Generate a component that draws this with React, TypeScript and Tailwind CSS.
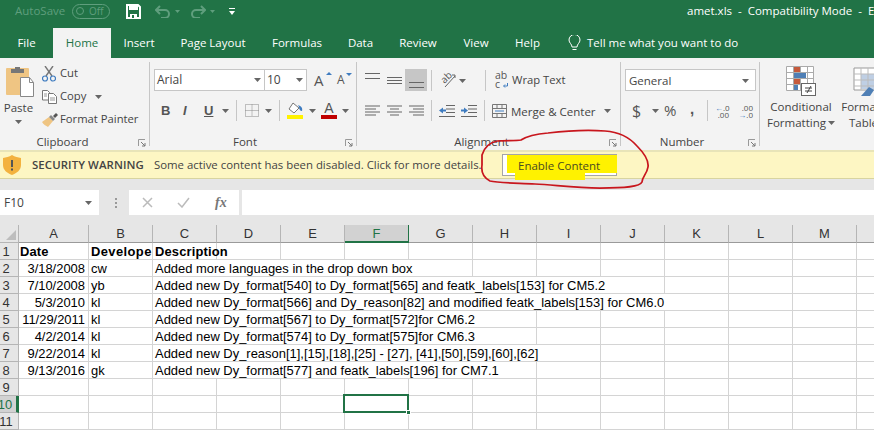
import type { ReactNode } from "react";

const ui = "font-['Open_Sans',sans-serif]";

const tabs = [
  { name: "File", w: "w-[53px]" },
  { name: "Home", w: "w-[58px]" },
  { name: "Insert", w: "w-[56px]" },
  { name: "Page Layout", w: "w-[92px]" },
  { name: "Formulas", w: "w-[76px]" },
  { name: "Data", w: "w-[51px]" },
  { name: "Review", w: "w-[64px]" },
  { name: "View", w: "w-[52px]" },
  { name: "Help", w: "w-[51px]" },
];

const columns = ["A", "B", "C", "D", "E", "F", "G", "H", "I", "J", "K", "L", "M", "N"];

const rows = [
  { date: "3/18/2008", dev: "cw", text: "Added more languages in the drop down box" },
  { date: "7/10/2008", dev: "yb", text: "Added new Dy_format[540] to Dy_format[565] and featk_labels[153] for CM5.2" },
  { date: "5/3/2010", dev: "kl", text: "Added new Dy_format[566] and Dy_reason[82] and modified featk_labels[153] for CM6.0" },
  { date: "11/29/2011", dev: "kl", text: "Added new Dy_format[567] to Dy_format[572]for CM6.2" },
  { date: "4/2/2014", dev: "kl", text: "Added new Dy_format[574] to Dy_format[575]for CM6.3" },
  { date: "9/22/2014", dev: "kl", text: "Added new Dy_reason[1],[15],[18],[25] - [27], [41],[50],[59],[60],[62]" },
  { date: "9/13/2016", dev: "gk", text: "Added new Dy_format[577] and featk_labels[196] for CM7.1" },
];

function Caret({ className = "" }: { className?: string }) {
  return (
    <svg width="7" height="4" viewBox="0 0 7 4" className={`shrink-0 ${className}`}>
      <path d="M0 0h7L3.500 4z" fill="#666" />
    </svg>
  );
}

function Launcher({ className = "" }: { className?: string }) {
  return (
    <svg width="8" height="8" viewBox="0 0 8 8" className={className}>
      <path d="M.5 7V.5H7" fill="none" stroke="#999" />
      <path d="M3 3l4 4M7 4v3H4" fill="none" stroke="#777" />
    </svg>
  );
}

function Sep({ className = "" }: { className?: string }) {
  return <div className={`h-[21px] w-px shrink-0 bg-[#c6c6c6] ${className}`} />;
}

function Group({ label, w, pad, children }: { label: string; w: string; pad: string; children: ReactNode }) {
  return (
    <div className={`relative flex h-[84px] shrink-0 flex-col border-r border-[#c6c6c6] ${w}`}>
      <div className="h-[73px] shrink-0">{children}</div>
      <div className={`flex h-[14px] shrink-0 items-center justify-center text-[11.500px] text-[#444] ${pad}`}>{label}</div>
      <Launcher className="absolute right-[3px] bottom-[-1px]" />
    </div>
  );
}

function Lines({ widths, align = "center" }: { widths: number[]; align?: string }) {
  return (
    <svg width="15" height="11" viewBox="0 0 15 11" className="shrink-0">
      {widths.map((w, i) => (
        <rect
          key={i}
          x={align === "left" ? 0 : align === "right" ? 15 - w : (15 - w) / 2}
          y={i * 3 + 0.5}
          width={w}
          height="1"
          fill="#666"
        />
      ))}
    </svg>
  );
}

function VLines({ ys }: { ys: number[] }) {
  return (
    <svg width="15" height="22" viewBox="0 0 15 22" className="shrink-0">
      {ys.map((y) => (
        <rect key={y} x="0" y={y} width="15" height="1" fill="#666" />
      ))}
    </svg>
  );
}

function Clipboard() {
  return (
    <Group label="Clipboard" w="w-[150px]" pad="pr-[24px]">
      <div className="flex">
        <div className="ml-[4px] flex w-[31px] shrink-0 flex-col items-center pt-[4px]">
          <svg width="30" height="31" viewBox="0 0 30 31">
            <rect x="1" y="2" width="23" height="27" rx="1" fill="#efc583" />
            <path d="M6 3h13v4H6zM10 1h5v3h-5z" fill="#777" />
            <path d="M15.500 11.500h9l4 5v14h-13z" fill="#fff" stroke="#888" />
            <path d="M24.500 11.500v5h4" fill="none" stroke="#888" />
          </svg>
          <div className="mt-[2px] ml-[-2px] text-[11.500px] leading-[18px] text-[#444]">Paste</div>
          <Caret className="mt-[3px] ml-[-2px]" />
        </div>
        <div className="ml-[7px] flex flex-col text-[11.250px] text-[#444]">
          <div className="flex h-[23px] items-center">
            <svg width="14" height="16" viewBox="0 0 14 16" className="shrink-0">
              <path d="M3 0l7 10M11 0L4 10" stroke="#777" strokeWidth="1.400" />
              <circle cx="3" cy="12.500" r="2.500" fill="none" stroke="#3f7cc0" strokeWidth="1.200" />
              <circle cx="11" cy="12.500" r="2.500" fill="none" stroke="#3f7cc0" strokeWidth="1.200" />
            </svg>
            <span className="ml-[4px]">Cut</span>
          </div>
          <div className="flex h-[23px] items-center">
            <svg width="15" height="14" viewBox="0 0 15 14" className="shrink-0">
              <path d="M.5.500h5l2 2V10H.5z" fill="#fff" stroke="#777" />
              <path d="M6.500 3.500h5l3 3v7h-8z" fill="#fff" stroke="#777" />
              <path d="M8 8h5M8 10h5M2 4h3M2 6h3" stroke="#999" />
            </svg>
            <span className="ml-[3px]">Copy</span>
            <Caret className="ml-[9px]" />
          </div>
          <div className="flex h-[23px] items-center">
            <svg width="16" height="14" viewBox="0 0 16 14" className="shrink-0">
              <path d="M0 9l7-5 4 4-5 6C4 13 1 11 0 9z" fill="#efc583" />
              <path d="M7 4l2-2 4 4-2 2z" fill="#888" />
              <path d="M11 3l3-3 2 2-3 3z" fill="#555" />
            </svg>
            <span className="ml-[2px] whitespace-nowrap">Format Painter</span>
          </div>
        </div>
      </div>
    </Group>
  );
}

function FontGroup() {
  return (
    <Group label="Font" w="w-[207px]" pad="pr-[16px]">
      <div className="flex items-center pt-[7px] pl-[4px]">
        <div className="flex h-[22px] w-[111px] items-center justify-between border border-[#c6c6c6] bg-white pr-[3px] pl-[2px] text-[12px] text-[#444]">
          Arial
          <Caret />
        </div>
        <div className="ml-[-1px] flex h-[22px] w-[43px] items-center justify-between border border-[#c6c6c6] bg-white pr-[3px] pl-[2px] text-[12px] text-[#444]">
          10
          <Caret />
        </div>
        <div className="relative ml-[7px] w-[14px] text-[15px] leading-none text-[#555]">
          A
          <svg width="6" height="3" viewBox="0 0 6 3" className="absolute top-[-1px] right-[-4px]"><path d="M0 3h6L3 0z" fill="#3f7cc0" /></svg>
        </div>
        <div className="relative ml-[9px] w-[12px] text-[12px] leading-none text-[#555]">
          A
          <svg width="6" height="3" viewBox="0 0 6 3" className="absolute top-[-1px] right-[-3px]"><path d="M0 0h6L3 3z" fill="#3f7cc0" /></svg>
        </div>
      </div>
      <div className="mt-[9px] flex h-[21px] items-center pl-[11px] text-[#555]">
        <span className="w-[22px] shrink-0 font-['Liberation_Sans',sans-serif] text-[13px] font-bold">B</span>
        <span className="w-[21px] shrink-0 font-['Liberation_Sans',sans-serif] text-[13px] font-bold italic">I</span>
        <span className="w-[9px] shrink-0 font-['Liberation_Sans',sans-serif] text-[13px] leading-[13px] font-bold underline">U</span>
        <Caret className="ml-[9px]" />
        <Sep className="ml-[7px]" />
        <svg width="14" height="13" viewBox="0 0 14 13" className="ml-[8px] shrink-0">
          <path d="M.5.500h13v12H.5zM7 .5v12M.5 6.500h13" fill="none" stroke="#888" strokeDasharray="1 1" />
        </svg>
        <Caret className="ml-[6px]" />
        <Sep className="ml-[7px]" />
        <svg width="17" height="18" viewBox="0 0 17 18" className="ml-[7px] shrink-0">
          <path d="M2 7l4-6 6 5-5 5z" fill="#fff" stroke="#777" />
          <path d="M11 3c3 1 5 3 4 6-2 0-3-2-3-4z" fill="#3f7cc0" />
          <rect y="13" width="16" height="4" fill="#fff200" />
        </svg>
        <Caret className="ml-[5px]" />
        <div className="ml-[5px] flex w-[16px] shrink-0 flex-col items-center">
          <span className="font-['Liberation_Sans',sans-serif] text-[14px] leading-[13px] text-[#555]">A</span>
          <div className="h-[4px] w-[16px] bg-[#c00000]" />
        </div>
        <Caret className="ml-[5px]" />
      </div>
    </Group>
  );
}

function AlignmentGroup() {
  return (
    <Group label="Alignment" w="w-[264px]" pad="pr-[14px]">
      <div className="flex h-[29px] items-end pl-[8px]">
        <div className="w-[22px] shrink-0"><VLines ys={[4, 9]} /></div>
        <div className="w-[18px] shrink-0"><VLines ys={[8, 11, 14]} /></div>
        <div className="flex h-[22px] w-[22px] shrink-0 justify-center bg-[#c6c6c6]"><VLines ys={[13, 18]} /></div>
        <Sep className="ml-[4px]" />
        <div className="relative mb-[1px] ml-[7px] h-[20px] w-[17px] shrink-0">
          <span className="absolute top-[1px] left-[1px] rotate-[-45deg] text-[10px] leading-[12px] text-[#555]">ab</span>
          <svg width="17" height="20" viewBox="0 0 17 20" className="absolute top-0 left-0">
            <path d="M6 17L16 6M13 5h3v3" fill="none" stroke="#666" />
          </svg>
        </div>
        <Caret className="mb-[8px] ml-[3px]" />
        <Sep className="ml-[19px]" />
        <div className="ml-[9px] flex h-[22px] items-center text-[11.250px] text-[#444]">
          <div className="relative h-[22px] w-[13px] shrink-0 text-[10.500px] leading-[9px] text-[#555]">
            <div className="pt-[2px]">ab</div>
            <div>c</div>
            <svg width="5" height="5" viewBox="0 0 5 5" className="absolute right-0 bottom-[3px]"><path d="M4.500 0v3H1M2 1.500L.5 3 2 4.500" fill="none" stroke="#3f7cc0" /></svg>
          </div>
          <span className="ml-[4px] pt-[1px] whitespace-nowrap">Wrap Text</span>
        </div>
      </div>
      <div className="mt-[9px] flex h-[21px] items-center pl-[8px]">
        <div className="w-[22px] shrink-0"><Lines widths={[15, 11, 15, 11]} align="left" /></div>
        <div className="w-[22px] shrink-0"><Lines widths={[15, 9, 15, 9]} /></div>
        <div className="w-[18px] shrink-0"><Lines widths={[15, 11, 15, 11]} align="right" /></div>
        <Sep className="ml-[4px]" />
        <svg width="16" height="12" viewBox="0 0 16 12" className="ml-[7px] shrink-0">
          <path d="M7 .5h9M7 4h9M7 7.500h9M0 11.500h16" stroke="#666" />
          <path d="M0 5.500l4-3v2h3v2H4v2z" fill="#3f7cc0" />
        </svg>
        <svg width="16" height="12" viewBox="0 0 16 12" className="ml-[6px] shrink-0">
          <path d="M7 .5h9M7 4h9M7 7.500h9M0 11.500h16" stroke="#666" />
          <path d="M7 5.500l-4-3v2H0v2h3v2z" fill="#3f7cc0" />
        </svg>
        <Sep className="ml-[7px]" />
        <svg width="15" height="14" viewBox="0 0 15 14" className="ml-[7px] shrink-0">
          <path d="M.5.500h14v13H.5zM.5 4.500h14M.5 9.500h14M5 .5v4M10 .5v4M5 9.500v4M10 9.500v4" fill="none" stroke="#777" />
          <path d="M3 7h9" stroke="#3f7cc0" />
        </svg>
        <span className="ml-[4px] pt-[2px] text-[11.500px] whitespace-nowrap text-[#444]">Merge &amp; Center</span>
        <Caret className="ml-[8px]" />
      </div>
    </Group>
  );
}

function NumberGroup() {
  return (
    <Group label="Number" w="w-[139px]" pad="pr-[16px]">
      <div className="pt-[7px] pl-[4px]">
        <div className="flex h-[22px] w-[131px] items-center justify-between border border-[#c6c6c6] bg-white pt-[1px] pr-[6px] pl-[3px] text-[11.500px] text-[#444]">
          General
          <Caret />
        </div>
      </div>
      <div className="mt-[9px] flex h-[21px] items-center pl-[11px] text-[#555]">
        <span className="w-[10px] shrink-0 text-[16px] leading-none">$</span>
        <Caret className="ml-[10px]" />
        <span className="ml-[5px] w-[14px] shrink-0 text-[15px] leading-none">%</span>
        <span className="mt-[-4px] ml-[12px] w-[6px] shrink-0 font-['Liberation_Sans',sans-serif] text-[15px] leading-none font-bold">,</span>
        <Sep className="ml-[11px]" />
        <div className="ml-[7px] w-[14px] shrink-0 text-right text-[8px] leading-[7px]">
          <div><span className="text-[#3f7cc0]">←</span>.0</div>
          <div>.00</div>
        </div>
        <div className="ml-[9px] w-[15px] shrink-0 text-right text-[8px] leading-[7px]">
          <div>.00</div>
          <div><span className="text-[#3f7cc0]">→</span>.0</div>
        </div>
      </div>
    </Group>
  );
}

function StylesGroup() {
  return (
    <div className="flex shrink-0 text-[11.500px] leading-[16px] text-[#444]">
      <div className="flex w-[78px] shrink-0 flex-col items-center pt-[4px] pl-[4px]">
        <svg width="30" height="30" viewBox="0 0 30 30" className="shrink-0">
          <path d="M.5.500h27v24H.5zM.5 6.500h27M.5 12.500h27M.5 18.500h27M7.500.5v24M14.500.5v24M21.500.5v24" fill="#fff" stroke="#aaa" />
          <rect x="8" y="1" width="6" height="5" fill="#c55a3c" />
          <rect x="8" y="7" width="12" height="5" fill="#4f7fb5" />
          <rect x="8" y="13" width="6" height="5" fill="#c55a3c" />
          <rect x="8" y="19" width="4" height="5" fill="#4f7fb5" />
          <rect x="15.500" y="17.500" width="14" height="12" fill="#fff" stroke="#666" />
          <path d="M19 22h7M19 25h7M25 20l-4 7" stroke="#444" />
        </svg>
        <span className="mt-[3px] whitespace-nowrap">Conditional</span>
        <span className="flex items-center whitespace-nowrap">Formatting<Caret className="ml-[2px]" /></span>
      </div>
      <div className="flex w-[60px] shrink-0 flex-col items-center pt-[4px]">
        <svg width="30" height="30" viewBox="0 0 30 30" className="shrink-0">
          <path d="M1 2h28v22H1z" fill="#fff" stroke="#999" />
          <rect x="8" y="8" width="21" height="15" fill="#bfcfe4" />
          <path d="M1 8h28M1 14h28M1 20h28M8 2v22M15 2v22M22 2v22" stroke="#bbb" />
          <path d="M8 30l8-9 5 3-4 6z" fill="#4f7fb5" />
        </svg>
        <span className="mt-[3px] whitespace-nowrap">Format as</span>
        <span className="flex items-center whitespace-nowrap">Table<Caret className="ml-[2px]" /></span>
      </div>
    </div>
  );
}

function Annotation() {
  return (
    <>
      <div className="absolute top-[155px] left-[507px] h-[18px] w-[110px] bg-[#fff200]" />
      <div className="absolute top-[168px] left-[515px] h-[12px] w-[70px] bg-[#fff200]" />
      <div className="absolute top-[158px] left-[518px] text-[11.500px] leading-[15px] text-[#4a4a20]">Enable Content</div>
      <svg width="874" height="430" viewBox="0 0 874 430" className="pointer-events-none absolute top-0 left-0">
        <path
          d="M482 155C484 148 488 143 497 141C505 140 515 141 521 140C527 136 535 134 548 133C565 131 590 130 605 131C620 132 630 138 637 146C644 153 649 160 648 167C647 174 642 177 642 182C640 187 625 188 600 188C575 188 555 185 535 184C515 183 498 183 490 181C484 178 481 172 482 165C482 160 482 158 482 155Z"
          fill="none"
          stroke="#c8161d"
          strokeWidth="1.750"
        />
      </svg>
    </>
  );
}

function Cell({ w, children, selected, className = "" }: { w: string; children?: ReactNode; selected?: boolean; className?: string }) {
  return (
    <div className={`relative h-full shrink-0 border-r border-b border-[#d4d4d4] ${w} ${className}`}>
      {children}
      {selected && (
        <div className="absolute top-[-2px] left-[-2px] z-20 h-[19px] w-[66px] border-2 border-[#217346]">
          <div className="absolute right-[-4px] bottom-[-4px] h-[5px] w-[5px] border border-white bg-[#217346]" />
        </div>
      )}
    </div>
  );
}

function RowHead({ n, active }: { n: number; active?: boolean }) {
  return (
    <div
      className={`flex h-full w-[19px] shrink-0 items-center justify-center border-b border-[#b5b5b5] pt-[1px] pr-[6px] font-normal tracking-normal ${
        active ? "border-r-3 border-r-[#217346] bg-[#d2d2d2] text-[#217346]" : "border-r border-r-[#b5b5b5] bg-[#e6e6e6] text-[#333]"
      }`}
    >
      {n}
    </div>
  );
}

function EmptyCols({ from, selectedCol }: { from: number; selectedCol?: number }) {
  return (
    <>
      {columns.slice(from).map((c, i) => (
        <Cell key={c} w="w-[64px]" selected={from + i === selectedCol} />
      ))}
    </>
  );
}

function Sheet() {
  return (
    <div className="font-['Liberation_Sans',sans-serif] text-[12.950px] leading-[18px] text-black">
      <div className="flex h-[18px]">
        <div className="flex w-[19px] shrink-0 items-end justify-end border-r border-b border-[#b5b5b5] bg-[#e6e6e6] p-[2px]">
          <svg width="10" height="10" viewBox="0 0 10 10"><path d="M10 0v10H0z" fill="#bdbdbd" /></svg>
        </div>
        {columns.map((c, i) => (
          <div
            key={c}
            className={`flex shrink-0 items-center justify-center border-r border-b pt-[1px] text-[#333] ${
              i === 0 ? "w-[70px]" : "w-[64px]"
            } ${c === "F" ? "border-b-2 border-b-[#217346] bg-[#d2d2d2] text-[#217346]" : "border-r-[#b5b5b5] border-b-[#9a9a9a] bg-[#e6e6e6]"}`}
          >
            {c}
          </div>
        ))}
      </div>
      <div className="flex h-[17px] font-bold tracking-[0.15px]">
        <RowHead n={1} />
        <Cell w="w-[70px]" className="pl-[1px]">Date</Cell>
        <Cell w="w-[64px]" className="overflow-hidden pl-[2px] tracking-[0.4px] whitespace-nowrap">Developer</Cell>
        <Cell w="w-[64px]" className="pl-[2px] whitespace-nowrap">Description</Cell>
        <EmptyCols from={3} />
      </div>
      {rows.map((r, i) => (
        <div key={r.date} className="flex h-[17px]">
          <RowHead n={i + 2} />
          <Cell w="w-[70px]" className="pr-[3px] text-right">{r.date}</Cell>
          <Cell w="w-[64px]" className="pl-[2px]">{r.dev}</Cell>
          <Cell w="w-[64px]" className="whitespace-nowrap">
            <span className="absolute top-0 left-[2px] z-10 h-[16px] bg-white pr-[1px]">{r.text}</span>
          </Cell>
          <EmptyCols from={3} />
        </div>
      ))}
      {[9, 10, 11].map((n) => (
        <div key={n} className="flex h-[17px]">
          <RowHead n={n} active={n === 10} />
          <Cell w="w-[70px]" />
          <EmptyCols from={1} selectedCol={n === 10 ? 5 : undefined} />
        </div>
      ))}
    </div>
  );
}

export default function App() {
  return (
    <div className={`relative h-[430px] w-[874px] overflow-hidden bg-white ${ui}`}>
      <div className="flex h-[28px] items-center overflow-hidden bg-[#217346] pb-[6px] text-[11.500px] text-white">
        <div className="flex w-[687px] shrink-0 items-center pl-[15px]">
          <span className="w-[50px] shrink-0 text-[#5f9e7d]">AutoSave</span>
          <div className="ml-[7px] flex h-[15px] w-[38px] shrink-0 items-center rounded-full border border-[#5f9e7d] pl-[3px] text-[10px] text-[#5f9e7d]">
            <div className="h-[8px] w-[8px] rounded-full border border-[#5f9e7d]" />
            <span className="ml-[5px]">Off</span>
          </div>
          <svg width="15" height="15" viewBox="0 0 15 15" className="ml-[16px] shrink-0">
            <path d="M1 1h11l2 2v11H1z" fill="none" stroke="#fff" strokeWidth="2" />
            <rect x="3" y="1" width="9" height="5" fill="#fff" />
            <rect x="4" y="10" width="7" height="4" fill="#fff" />
            <rect x="6" y="11" width="2" height="3" fill="#217346" />
          </svg>
          <svg width="16" height="13" viewBox="0 0 16 13" className="ml-[14px] shrink-0">
            <path d="M2 5h8a4 4 0 0 1 0 8H6M5 1L1 5l4 4" fill="none" stroke="#5f9e7d" strokeWidth="2" />
          </svg>
          <svg width="5" height="3" viewBox="0 0 5 3" className="ml-[4px] shrink-0"><path d="M0 0h5L2.500 3z" fill="#5f9e7d" /></svg>
          <svg width="16" height="13" viewBox="0 0 16 13" className="ml-[10px] shrink-0">
            <path d="M14 5H6a4 4 0 0 0 0 8h4M11 1l4 4-4 4" fill="none" stroke="#5f9e7d" strokeWidth="2" />
          </svg>
          <svg width="5" height="3" viewBox="0 0 5 3" className="ml-[4px] shrink-0"><path d="M0 0h5L2.500 3z" fill="#5f9e7d" /></svg>
          <svg width="6" height="7" viewBox="0 0 6 7" className="ml-[14px] shrink-0"><path d="M0 0h6v1H0zM0 3h6L3 7z" fill="#fff" /></svg>
        </div>
        <span className="whitespace-nowrap">amet.xls&nbsp; -&nbsp; Compatibility Mode&nbsp; -&nbsp; Excel</span>
      </div>
      <div className="flex h-[30px] items-stretch bg-[#217346] text-[11.500px] text-white">
        {tabs.map((t) => (
          <div
            key={t.name}
            className={`flex items-center justify-center ${t.w} ${t.name === "Home" ? "bg-[#f3f3f3] text-[#217346]" : ""}`}
          >
            {t.name}
          </div>
        ))}
        <svg width="13" height="17" viewBox="0 0 13 17" className="mt-[7px] ml-[15px]">
          <path d="M4 12c0-3-3-4-3-7a5.500 5.500 0 0 1 11 0c0 3-3 4-3 7zM4.500 14.500h4" fill="none" stroke="#fff" />
        </svg>
        <span className="ml-[6px] flex items-center">Tell me what you want to do</span>
      </div>
      <div className="flex h-[92px] bg-[#f3f3f3] pt-[4px]">
        <Clipboard />
        <FontGroup />
        <AlignmentGroup />
        <NumberGroup />
        <StylesGroup />
      </div>
      <div className="relative flex h-[29px] items-center border-t-2 border-b border-t-[#e8e4b8] border-b-[#d8d4a0] bg-[#fdf6c3] text-[11.400px] text-[#444]">
        <svg width="18" height="20" viewBox="0 0 18 20" className="ml-[3px] shrink-0">
          <path d="M9 0c3 2 6 2.500 9 3v7c0 5-4 8-9 10-5-2-9-5-9-10V3c3-.5 6-1 9-3z" fill="#f3b23e" />
          <path d="M8 5h2v7H8zM8 13.500h2v2H8z" fill="#555" />
        </svg>
        <span className="ml-[11px] font-semibold tracking-[0.1px]">SECURITY WARNING</span>
        <span className="ml-[10px]">Some active content has been disabled. Click for more details.</span>
        <div className="absolute top-[2px] left-[502px] h-[22px] w-[115px] border border-[#a5a5a5] bg-white" />
      </div>
      <div className="flex h-[46px] bg-[#e6e6e6] pt-[11px]">
        <div className="flex h-[25px] w-[99px] shrink-0 items-center justify-between bg-white pr-[7px] pl-[4px] text-[12px] text-[#444]">
          F10
          <Caret />
        </div>
        <div className="ml-[15px] flex h-[25px] w-[4px] shrink-0 flex-col items-center justify-center gap-[2px]">
          <div className="h-[2px] w-[2px] bg-[#999]" />
          <div className="h-[2px] w-[2px] bg-[#999]" />
          <div className="h-[2px] w-[2px] bg-[#999]" />
        </div>
        <div className="ml-[11px] flex h-[25px] w-[110px] shrink-0 items-center bg-white pl-[13px]">
          <svg width="11" height="11" viewBox="0 0 11 11" className="shrink-0"><path d="M1 1l9 9M10 1l-9 9" stroke="#bbb" strokeWidth="1.500" /></svg>
          <svg width="13" height="11" viewBox="0 0 13 11" className="ml-[24px] shrink-0"><path d="M1 6l4 4 7-9" fill="none" stroke="#bbb" strokeWidth="1.500" /></svg>
          <span className="ml-[25px] font-['Liberation_Serif',serif] text-[14px] font-bold text-[#777] italic">fx</span>
        </div>
        <div className="ml-[3px] h-[25px] flex-1 bg-white" />
      </div>
      <Sheet />
      <Annotation />
    </div>
  );
}
